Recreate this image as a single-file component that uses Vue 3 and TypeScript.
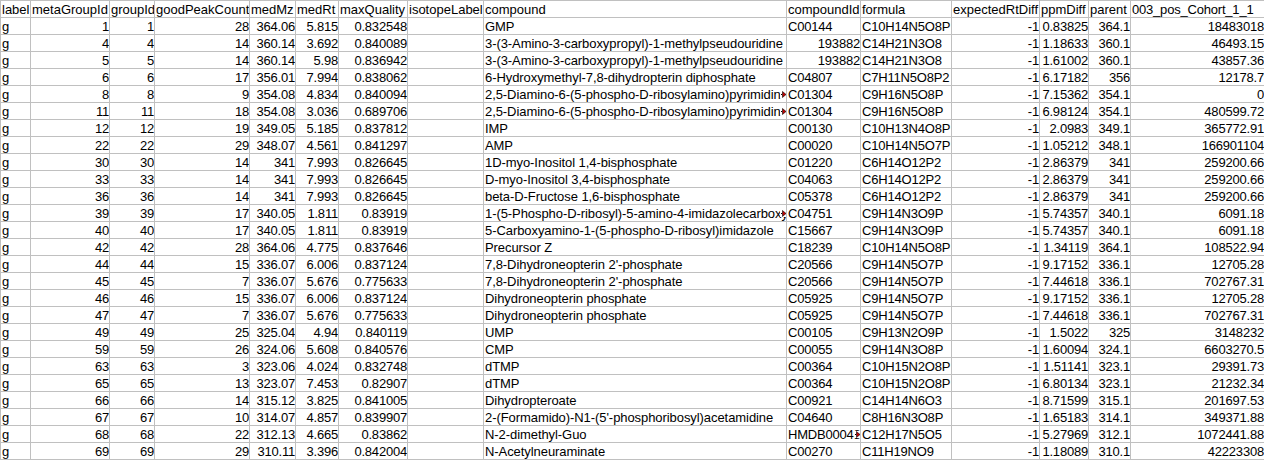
<script setup lang="ts">
type Row = (string | number)[];
const widths = [30, 79, 45, 95, 46, 43, 69, 76, 303, 74, 91, 88, 49, 42, 134];
const headers = ['label','metaGroupId','groupId','goodPeakCount','medMz','medRt','maxQuality','isotopeLabel','compound','compoundId','formula','expectedRtDiff','ppmDiff','parent','003_pos_Cohort_1_1'];
const raw = `1|1|28|364.06|5.815|0.832548|GMP|C00144|C10H14N5O8P|0.83825|364.1|18483018
4|4|14|360.14|3.692|0.840089|3-(3-Amino-3-carboxypropyl)-1-methylpseudouridine|193882|C14H21N3O8|1.18633|360.1|46493.15
5|5|14|360.14|5.98|0.836942|3-(3-Amino-3-carboxypropyl)-1-methylpseudouridine|193882|C14H21N3O8|1.61002|360.1|43857.36
6|6|17|356.01|7.994|0.838062|6-Hydroxymethyl-7,8-dihydropterin diphosphate|C04807|C7H11N5O8P2|6.17182|356|12178.7
8|8|9|354.08|4.834|0.840094|2,5-Diamino-6-(5-phospho-D-ribosylamino)pyrimidin-4(3H)-one|C01304|C9H16N5O8P|7.15362|354.1|0
11|11|18|354.08|3.036|0.689706|2,5-Diamino-6-(5-phospho-D-ribosylamino)pyrimidin-4(3H)-one|C01304|C9H16N5O8P|6.98124|354.1|480599.72
12|12|19|349.05|5.185|0.837812|IMP|C00130|C10H13N4O8P|2.0983|349.1|365772.91
22|22|29|348.07|4.561|0.841297|AMP|C00020|C10H14N5O7P|1.05212|348.1|166901104
30|30|14|341|7.993|0.826645|1D-myo-Inositol 1,4-bisphosphate|C01220|C6H14O12P2|2.86379|341|259200.66
33|33|14|341|7.993|0.826645|D-myo-Inositol 3,4-bisphosphate|C04063|C6H14O12P2|2.86379|341|259200.66
36|36|14|341|7.993|0.826645|beta-D-Fructose 1,6-bisphosphate|C05378|C6H14O12P2|2.86379|341|259200.66
39|39|17|340.05|1.811|0.83919|1-(5-Phospho-D-ribosyl)-5-amino-4-imidazolecarboxylate|C04751|C9H14N3O9P|5.74357|340.1|6091.18
40|40|17|340.05|1.811|0.83919|5-Carboxyamino-1-(5-phospho-D-ribosyl)imidazole|C15667|C9H14N3O9P|5.74357|340.1|6091.18
42|42|28|364.06|4.775|0.837646|Precursor Z|C18239|C10H14N5O8P|1.34119|364.1|108522.94
44|44|15|336.07|6.006|0.837124|7,8-Dihydroneopterin 2'-phosphate|C20566|C9H14N5O7P|9.17152|336.1|12705.28
45|45|7|336.07|5.676|0.775633|7,8-Dihydroneopterin 2'-phosphate|C20566|C9H14N5O7P|7.44618|336.1|702767.31
46|46|15|336.07|6.006|0.837124|Dihydroneopterin phosphate|C05925|C9H14N5O7P|9.17152|336.1|12705.28
47|47|7|336.07|5.676|0.775633|Dihydroneopterin phosphate|C05925|C9H14N5O7P|7.44618|336.1|702767.31
49|49|25|325.04|4.94|0.840119|UMP|C00105|C9H13N2O9P|1.5022|325|3148232
59|59|26|324.06|5.608|0.840576|CMP|C00055|C9H14N3O8P|1.60094|324.1|6603270.5
63|63|3|323.06|4.024|0.832748|dTMP|C00364|C10H15N2O8P|1.51141|323.1|29391.73
65|65|13|323.07|7.453|0.82907|dTMP|C00364|C10H15N2O8P|6.80134|323.1|21232.34
66|66|14|315.12|3.825|0.841005|Dihydropteroate|C00921|C14H14N6O3|8.71599|315.1|201697.53
67|67|10|314.07|4.857|0.839907|2-(Formamido)-N1-(5'-phosphoribosyl)acetamidine|C04640|C8H16N3O8P|1.65183|314.1|349371.88
68|68|22|312.13|4.665|0.83862|N-2-dimethyl-Guo|HMDB0004824|C12H17N5O5|5.27969|312.1|1072441.88
69|69|29|310.11|3.396|0.842004|N-Acetylneuraminate|C00270|C11H19NO9|1.18089|310.1|42223308`;
const rows: Row[] = raw.split('\n').map((l) => {
  const p = l.split('|');
  return ['g', p[0], p[1], p[2], p[3], p[4], p[5], '', p[6], p[7], p[8], '-1', p[9], p[10], p[11]];
});
const leftCols = new Set([0, 7, 8, 10]);
function isLeft(i: number, v: string | number) {
  if (leftCols.has(i)) return true;
  if (i === 9) return !/^\d+$/.test(String(v));
  return false;
}
function overflows(i: number, v: string | number) {
  const s = String(v);
  return (i === 8 && s.length > 50) || (i === 9 && s.length > 8);
}
</script>

<template>
  <div class="sheet">
    <table class="grid">
      <colgroup>
        <col v-for="(w, i) in widths" :key="i" :style="{ width: w + 'px' }" />
      </colgroup>
      <tbody>
        <tr>
          <td v-for="(h, hi) in headers" :key="h" :class="{ tight: hi === 14 }">{{ h }}</td>
        </tr>
        <tr v-for="(r, ri) in rows" :key="ri">
          <td v-for="(c, ci) in r" :key="ci" :class="{ right: !isLeft(ci, c), tight: ci !== 0 && ci !== 8, name: ci === 8 }">
            {{ c }}
            <svg v-if="overflows(ci, c)" class="more" width="6" height="7" viewBox="-1 0 6 7">
              <path d="M0 3h1v1H0z" fill="#000" />
              <path d="M1.5 0.5 L5 3.5 L1.5 6.5 Z" fill="#c00000" stroke="#000" stroke-width="0.6" />
            </svg>
          </td>
        </tr>
      </tbody>
    </table>
  </div>
</template>

<style>
html, body { margin: 0; background: #fff; }
</style>

<style scoped>
.sheet {
  width: 1264px;
  height: 460px;
  overflow: hidden;
  background: #fff;
}
.grid {
  table-layout: fixed;
  border-collapse: collapse;
  width: 1264px;
  font-family: "Liberation Sans", Arial, sans-serif;
  font-size: 13px;
  color: #000;
}
.grid td {
  position: relative;
  height: 15px;
  padding: 1px 0 0 1px;
  border: 1px solid #c0c0c0;
  line-height: 15px;
  white-space: nowrap;
  overflow: hidden;
  text-align: left;
  box-sizing: content-box;
}
.grid td.right { text-align: right; }
.grid td.tight { letter-spacing: -0.2px; }
.grid td.name { letter-spacing: -0.07px; }
.more {
  position: absolute;
  right: 0;
  top: 5px;
  background: #fff;
}
</style>
